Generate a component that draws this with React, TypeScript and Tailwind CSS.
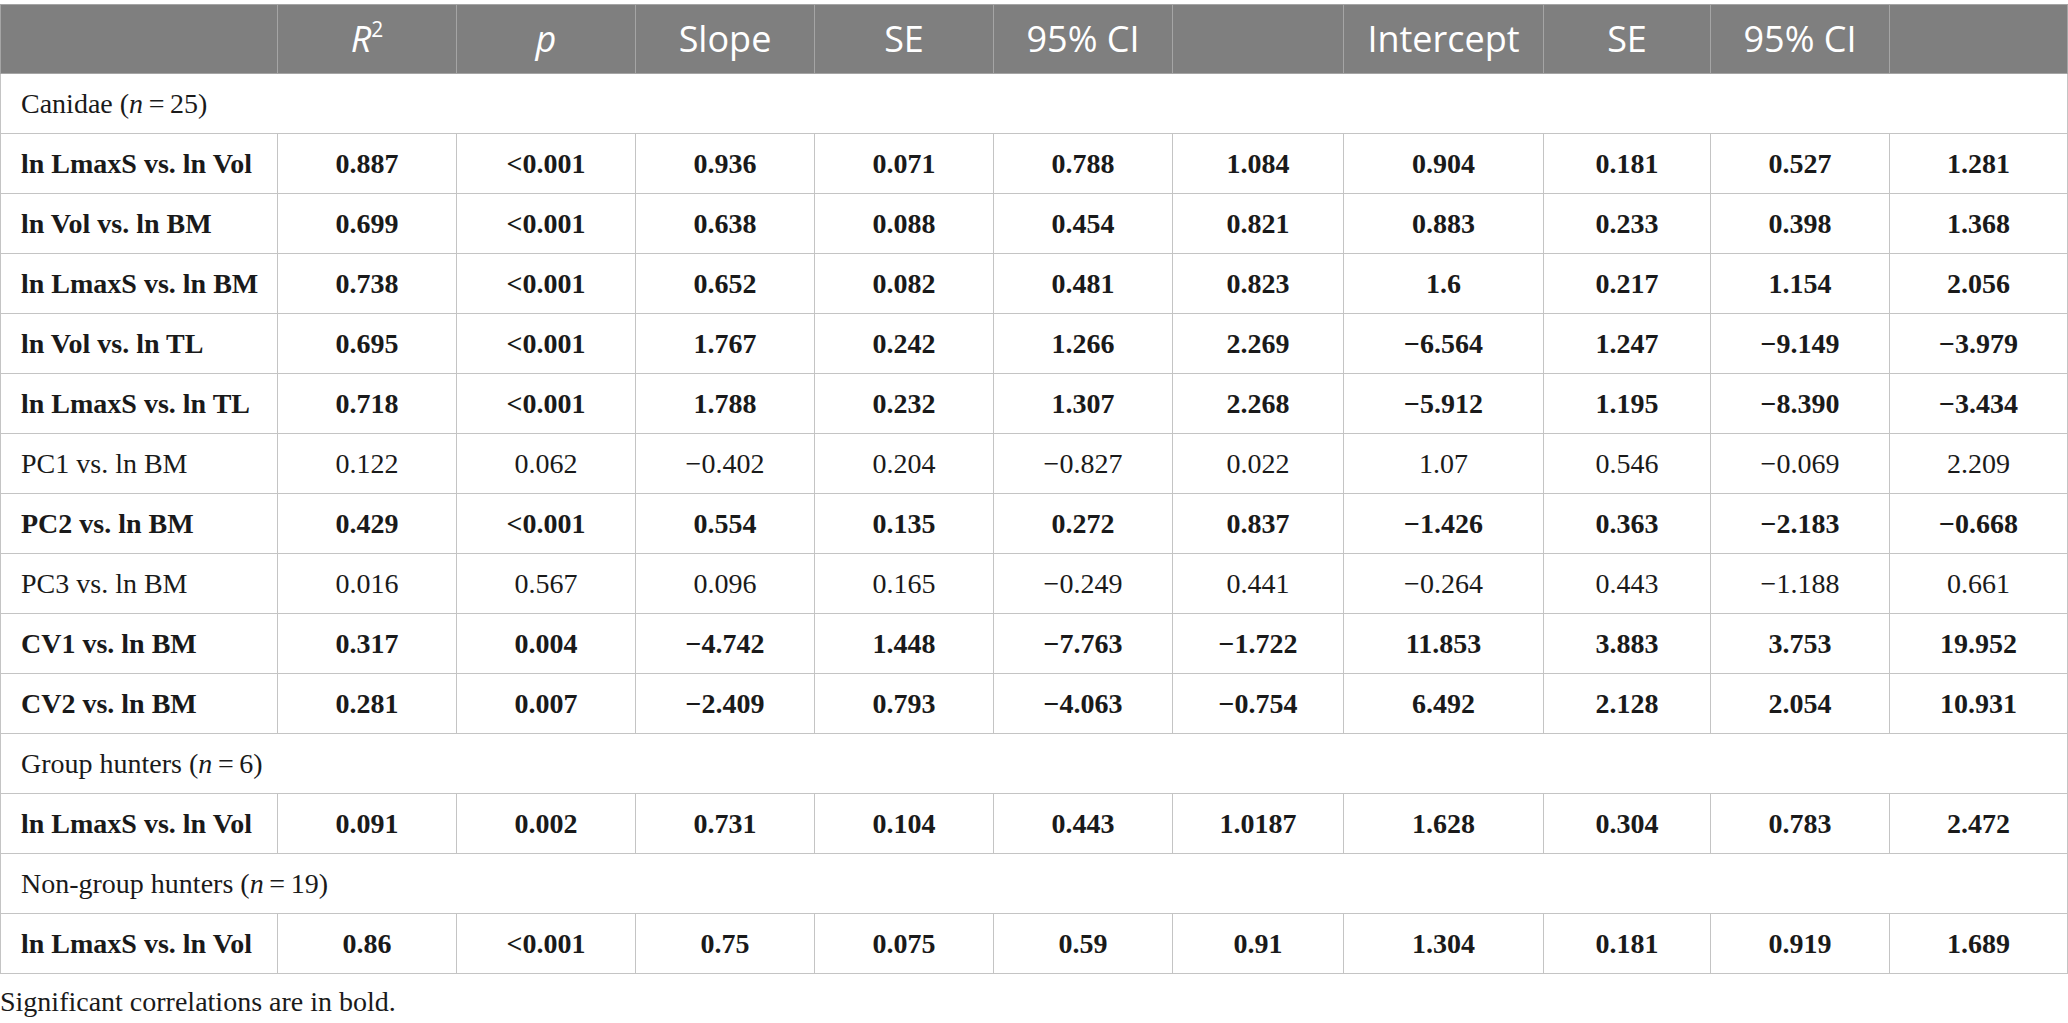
import React from "react";

type Row =
  | { kind: "group"; label: string; n: string }
  | { kind: "data"; bold: boolean; cells: string[] };

const rows: Row[] = [
  { kind: "group", label: "Canidae", n: "25" },
  { kind: "data", bold: true, cells: ["ln LmaxS vs. ln Vol", "0.887", "<0.001", "0.936", "0.071", "0.788", "1.084", "0.904", "0.181", "0.527", "1.281"] },
  { kind: "data", bold: true, cells: ["ln Vol vs. ln BM", "0.699", "<0.001", "0.638", "0.088", "0.454", "0.821", "0.883", "0.233", "0.398", "1.368"] },
  { kind: "data", bold: true, cells: ["ln LmaxS vs. ln BM", "0.738", "<0.001", "0.652", "0.082", "0.481", "0.823", "1.6", "0.217", "1.154", "2.056"] },
  { kind: "data", bold: true, cells: ["ln Vol vs. ln TL", "0.695", "<0.001", "1.767", "0.242", "1.266", "2.269", "−6.564", "1.247", "−9.149", "−3.979"] },
  { kind: "data", bold: true, cells: ["ln LmaxS vs. ln TL", "0.718", "<0.001", "1.788", "0.232", "1.307", "2.268", "−5.912", "1.195", "−8.390", "−3.434"] },
  { kind: "data", bold: false, cells: ["PC1 vs. ln BM", "0.122", "0.062", "−0.402", "0.204", "−0.827", "0.022", "1.07", "0.546", "−0.069", "2.209"] },
  { kind: "data", bold: true, cells: ["PC2 vs. ln BM", "0.429", "<0.001", "0.554", "0.135", "0.272", "0.837", "−1.426", "0.363", "−2.183", "−0.668"] },
  { kind: "data", bold: false, cells: ["PC3 vs. ln BM", "0.016", "0.567", "0.096", "0.165", "−0.249", "0.441", "−0.264", "0.443", "−1.188", "0.661"] },
  { kind: "data", bold: true, cells: ["CV1 vs. ln BM", "0.317", "0.004", "−4.742", "1.448", "−7.763", "−1.722", "11.853", "3.883", "3.753", "19.952"] },
  { kind: "data", bold: true, cells: ["CV2 vs. ln BM", "0.281", "0.007", "−2.409", "0.793", "−4.063", "−0.754", "6.492", "2.128", "2.054", "10.931"] },
  { kind: "group", label: "Group hunters", n: "6" },
  { kind: "data", bold: true, cells: ["ln LmaxS vs. ln Vol", "0.091", "0.002", "0.731", "0.104", "0.443", "1.0187", "1.628", "0.304", "0.783", "2.472"] },
  { kind: "group", label: "Non-group hunters", n: "19" },
  { kind: "data", bold: true, cells: ["ln LmaxS vs. ln Vol", "0.86", "<0.001", "0.75", "0.075", "0.59", "0.91", "1.304", "0.181", "0.919", "1.689"] },
];

// widths of the 11 columns, in px
const widths = [277, 179, 179, 179, 179, 179, 171, 200, 167, 179, 178];

export default function App() {
  return (
    <div
      className="w-[2068px] min-h-screen bg-white pt-[4px]"
      style={{ fontFamily: '"Liberation Serif", "Times New Roman", serif' }}
    >
      <table className="w-[2068px] table-fixed border-collapse text-[28px] text-[#1a1a1a]">
        <colgroup>
          {widths.map((w, i) => (
            <col key={i} style={{ width: w }} />
          ))}
        </colgroup>
        <thead>
          <tr
            className="h-[69px] bg-[#7f7f7f] text-white text-[36px] font-normal"
            style={{ fontFamily: '"Open Sans", "Noto Sans", sans-serif' }}
          >
            <th className="border border-[#a5a5a5] font-normal"></th>
            <th className="border border-[#a5a5a5] font-normal">
              <span className="italic">R</span>
              <span className="text-[21px] align-top relative top-[2px]">2</span>
            </th>
            <th className="border border-[#a5a5a5] font-normal italic">p</th>
            <th className="border border-[#a5a5a5] font-normal">Slope</th>
            <th className="border border-[#a5a5a5] font-normal">SE</th>
            <th className="border border-[#a5a5a5] font-normal">95% CI</th>
            <th className="border border-[#a5a5a5] font-normal"></th>
            <th className="border border-[#a5a5a5] font-normal">Intercept</th>
            <th className="border border-[#a5a5a5] font-normal">SE</th>
            <th className="border border-[#a5a5a5] font-normal">95% CI</th>
            <th className="border border-[#a5a5a5] font-normal"></th>
          </tr>
        </thead>
        <tbody>
          {rows.map((row, i) =>
            row.kind === "group" ? (
              <tr key={i} className="h-[60px]">
                <td colSpan={11} className="border border-[#c4c4c4] pl-[20px] text-left">
                  {row.label} (<span className="italic">n</span>{"\u2009=\u2009"}{row.n})
                </td>
              </tr>
            ) : (
              <tr key={i} className="h-[60px]">
                {row.cells.map((c, j) => (
                  <td
                    key={j}
                    className={
                      j === 0
                        ? "border border-[#c4c4c4] pl-[20px] text-left"
                        : "border border-[#c4c4c4] text-center"
                    }
                  >
                    <span className={row.bold || (i === 10 && j > 0) ? "font-bold" : ""}>{c}</span>
                  </td>
                ))}
              </tr>
            )
          )}
        </tbody>
      </table>
      <p className="mt-[12px] text-[28px] leading-[32px] text-[#1a1a1a]">Significant correlations are in bold.</p>
    </div>
  );
}
